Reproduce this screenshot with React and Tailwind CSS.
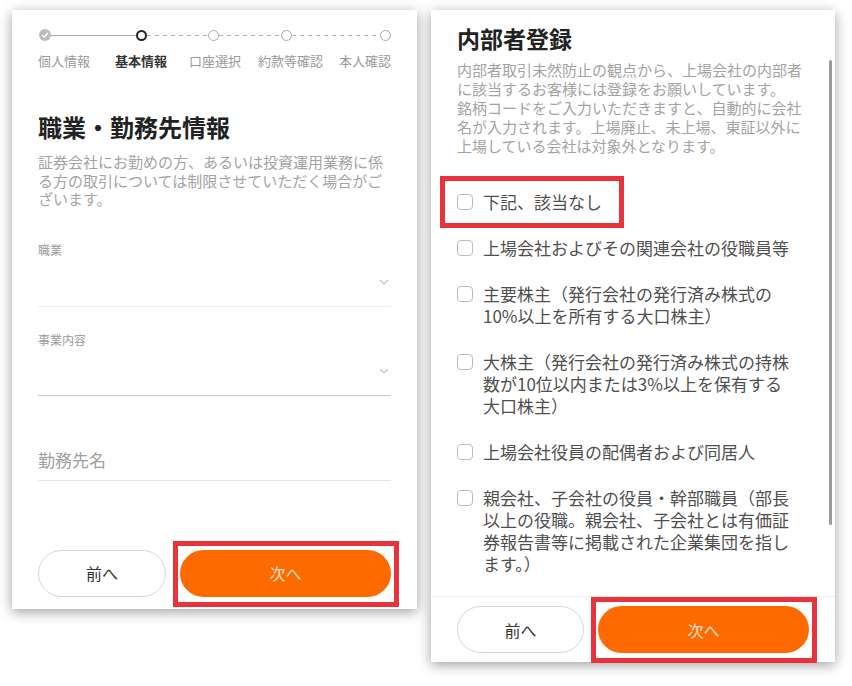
import React from 'react'

const Chevron = () => (
    <svg width="10" height="6" viewBox="0 0 10 6" className="mr-[2px]">
        <polyline points="1,1 5,5 9,1" fill="none" stroke="#c4c4c4" strokeWidth="1.2" />
    </svg>
)

const Dashed = ({ w }) => (
    <div
        className="h-px bg-[repeating-linear-gradient(90deg,#b5b5b5_0_4px,transparent_4px_8px)]"
        style={{ width: w }}
    />
)

const Ring = () => <div className="w-[11px] h-[11px] rounded-full border border-[#aaa] bg-white shrink-0" />

const Stepper = () => (
    <div>
        <div className="flex items-center h-[12px] ml-[1px]">
            <div className="w-[12px] h-[12px] rounded-full bg-[#bdbdbd] flex items-center justify-center shrink-0">
                <svg width="8" height="8" viewBox="0 0 8 8">
                    <polyline points="1.3,4.2 3.2,6 6.8,2" fill="none" stroke="#fff" strokeWidth="1.4" />
                </svg>
            </div>
            <div className="h-px w-[85px] bg-[#a8a8a8]" />
            <div className="w-[11px] h-[11px] rounded-full border-2 border-[#222] shrink-0" />
            <Dashed w={61} />
            <Ring />
            <Dashed w={63} />
            <Ring />
            <Dashed w={88} />
            <Ring />
        </div>
        <div className="flex mt-[11px] text-[13px] leading-[18px] text-[#9a9a9a]">
            <span>個人情報</span>
            <span className="ml-[25px] font-bold text-[#333]">基本情報</span>
            <span className="ml-[22px]">口座選択</span>
            <span className="ml-[17px]">約款等確認</span>
            <span className="ml-[16px]">本人確認</span>
        </div>
    </div>
)

const Checkbox = () => (
    <span className="w-[16px] h-[16px] mt-[3px] rounded-[4px] border-[1.5px] border-[#bcbcbc] bg-white shrink-0" />
)

const Item = ({ children, marked }) => (
    <div className="relative flex items-start gap-[10px]">
        <Checkbox />
        <p className="w-[313px] text-[17px] leading-[22px] text-[#4f4f4f]">{children}</p>
        {marked && (
            <span className="absolute -top-[15px] -left-[17px] w-[184px] h-[52px] border-[5px] border-[#e8323c]" />
        )}
    </div>
)

const Buttons = ({ marked }) => (
    <div className="flex gap-[14px]">
        <button className="w-[128px] h-[47px] rounded-full border border-[#d6d6d6] bg-white text-[16px] text-[#333]">
            前へ
        </button>
        <div className="relative">
            <button className="w-[211px] h-[47px] rounded-full bg-[#ff6a00] text-[16px] text-[#ffe3cf]">
                次へ
            </button>
            {marked && (
                <span className="absolute -top-[9px] -bottom-[10px] -left-[7px] -right-[8px] border-[5px] border-[#e8323c]" />
            )}
        </div>
    </div>
)

const LeftCard = () => (
    <div className="w-[405px] h-[599px] bg-white shadow-[0_3px_12px_rgba(0,0,0,0.38)] px-[26px] pt-[19px] flex flex-col">
        <Stepper />
        <h1 className="mt-[41px] text-[24px] leading-[32px] font-bold text-[#222]">職業・勤務先情報</h1>
        <p className="mt-[10px] text-[15px] leading-[18.5px] text-[#a3a3a3]">
            証券会社にお勤めの方、あるいは投資運用業務に係る方の取引については制限させていただく場合がございます。
        </p>

        <label className="mt-[33px] text-[12px] leading-[16px] text-[#9a9a9a]">職業</label>
        <div className="h-[49px] border-b border-[#eeeeee] flex items-center justify-end">
            <Chevron />
        </div>

        <label className="mt-[25px] text-[12px] leading-[16px] text-[#9a9a9a]">事業内容</label>
        <div className="h-[48px] border-b-[1.5px] border-[#c8c8c8] flex items-center justify-end">
            <Chevron />
        </div>

        <div className="mt-[45px] h-[40px] border-b border-[#e6e6e6] flex items-center">
            <span className="text-[17px] text-[#a0a0a0]">勤務先名</span>
        </div>

        <div className="mt-[69px]">
            <Buttons marked />
        </div>
    </div>
)

const RightCard = () => (
    <div className="relative w-[404px] h-[652px] bg-white shadow-[0_3px_12px_rgba(0,0,0,0.38)] flex flex-col">
        <div className="flex-1 overflow-hidden px-[26px] pt-[13px]">
            <h1 className="text-[23px] leading-[30px] font-bold text-[#222]">内部者登録</h1>
            <p className="mt-[7px] text-[15px] leading-[19px] text-[#a3a3a3]">
                内部者取引未然防止の観点から、上場会社の内部者に該当するお客様には登録をお願いしています。
                <br />
                銘柄コードをご入力いただきますと、自動的に会社名が入力されます。上場廃止、未上場、東証以外に上場している会社は対象外となります。
            </p>
            <div className="mt-[36px] flex flex-col gap-[24px]">
                <Item marked>下記、該当なし</Item>
                <Item>上場会社およびその関連会社の役職員等</Item>
                <Item>主要株主（発行会社の発行済み株式の10%以上を所有する大口株主）</Item>
                <Item>大株主（発行会社の発行済み株式の持株数が10位以内または3%以上を保有する大口株主）</Item>
                <Item>上場会社役員の配偶者および同居人</Item>
                <Item>親会社、子会社の役員・幹部職員（部長以上の役職。親会社、子会社とは有価証券報告書等に掲載された企業集団を指します。）</Item>
            </div>
        </div>
        <div className="border-t border-[#ececec] px-[26px] pt-[9px] pb-[9px]">
            <Buttons marked />
        </div>
        <span className="absolute left-[398px] top-[50px] w-[3px] h-[465px] rounded-full bg-[#9a9a9a]" />
    </div>
)

export default function App() {
    return (
        <div className="w-[852px] h-[686px] bg-white flex gap-[14px] pl-[12px] pt-[10px] font-['Noto_Sans_CJK_JP','Noto_Sans',sans-serif]">
            <LeftCard />
            <RightCard />
        </div>
    )
}
